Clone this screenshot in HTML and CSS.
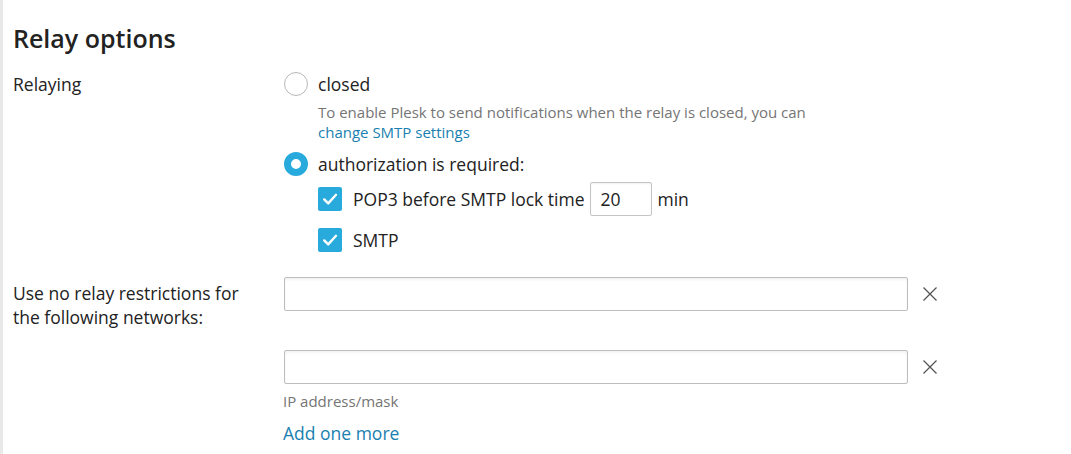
FILE: index.html
```html
<!DOCTYPE html>
<html>
<head>
<meta charset="utf-8">
<link rel="stylesheet" href="styles.css">
</head>
<body>
<div class="page">
  <h2 class="title">Relay options</h2>
  <div class="form-row">
    <div class="label">Relaying</div>
    <div class="field">
      <div class="option">
        <span class="radio"></span>
        <span class="option-text">closed</span>
      </div>
      <div class="hint indent hint-relay">To enable Plesk to send notifications when the relay is closed, you can<br><a class="link" href="#">change SMTP settings</a></div>
      <div class="option option-2">
        <span class="radio checked"></span>
        <span class="option-text">authorization is required:</span>
      </div>
      <div class="option indent check-row">
        <span class="checkbox"><svg width="24" height="24" viewBox="0 0 24 24"><path d="M6.2 12.4l4 4 7.8-8.6" fill="none" stroke="#fff" stroke-width="2.4" stroke-linecap="round" stroke-linejoin="round"/></svg></span>
        <span class="option-text cb-text">POP3 before SMTP lock time</span>
        <span class="small-input">20</span>
        <span class="option-text unit">min</span>
      </div>
      <div class="option indent check-row-2">
        <span class="checkbox"><svg width="24" height="24" viewBox="0 0 24 24"><path d="M6.2 12.4l4 4 7.8-8.6" fill="none" stroke="#fff" stroke-width="2.4" stroke-linecap="round" stroke-linejoin="round"/></svg></span>
        <span class="option-text cb-text">SMTP</span>
      </div>
    </div>
  </div>
  <div class="form-row row-networks">
    <div class="label label-multi">Use no relay restrictions for<br>the following networks:</div>
    <div class="field">
      <div class="net-item">
        <div class="net-line">
          <span class="text-input"></span>
          <span class="remove"><svg width="16" height="16" viewBox="0 0 16 16"><path d="M1.5 1.5l13 13M14.5 1.5l-13 13" stroke="#555" stroke-width="1.3" fill="none"/></svg></span>
        </div>
        <div class="hint net-hint"></div>
      </div>
      <div class="net-item">
        <div class="net-line">
          <span class="text-input"></span>
          <span class="remove"><svg width="16" height="16" viewBox="0 0 16 16"><path d="M1.5 1.5l13 13M14.5 1.5l-13 13" stroke="#555" stroke-width="1.3" fill="none"/></svg></span>
        </div>
        <div class="hint net-hint">IP address/mask</div>
      </div>
      <a class="link add-more" href="#">Add one more</a>
    </div>
  </div>
</div>
</body>
</html>
```

FILE: styles.css
```css
html, body {
  margin: 0;
  padding: 0;
  background: #fff;
}
body {
  font-family: "Open Sans", "DejaVu Sans", sans-serif;
  color: #222;
  width: 1071px;
  height: 454px;
  overflow: hidden;
}
.page {
  border-left: 3px solid #e8e8e8;
  padding-left: 10px;
  height: 454px;
  box-sizing: border-box;
  padding-top: 22px;
}
.title {
  margin: 0;
  font-size: 25px;
  font-weight: 600;
  line-height: 32px;
  color: #222;
}
.form-row {
  display: grid;
  grid-template-columns: 271px 1fr;
  margin-top: 18px;
}
.label {
  font-size: 17.5px;
  line-height: 24px;
  color: #222;
}
.row-networks {
  margin-top: 25px;
}
.label-multi {
  padding-top: 4px;
}
.option {
  display: flex;
  align-items: center;
  min-height: 24px;
  font-size: 17.5px;
  line-height: 24px;
}
.option .radio {
  margin-right: 10px;
}
.option-2 {
  margin-top: 10px;
}
.indent {
  margin-left: 34px;
}
.radio {
  width: 24px;
  height: 24px;
  box-sizing: border-box;
  border: 1px solid #b8b8b8;
  border-radius: 50%;
  background: #fff;
  flex: none;
}
.radio.checked {
  border: 7px solid #28aadc;
}
.checkbox {
  width: 24px;
  height: 24px;
  border-radius: 2px;
  background: #28aadc;
  flex: none;
  display: block;
}
.checkbox svg {
  display: block;
}
.cb-text {
  margin-left: 11px;
}
.check-row {
  margin-top: 6px;
}
.check-row-2 {
  margin-top: 12px;
}
.small-input {
  width: 62px;
  height: 34px;
  box-sizing: border-box;
  border: 1px solid #c4c4c4;
  border-radius: 2px;
  padding: 0 10px;
  margin-left: 5px;
  font-size: 17.5px;
  line-height: 32px;
  color: #222;
  box-shadow: inset 0 1px 2px rgba(0,0,0,0.06);
}
.unit {
  margin-left: 6px;
}
.hint {
  font-size: 15px;
  line-height: 20px;
  color: #757575;
}
.hint-relay {
  margin-top: 6px;
}
.link {
  color: #1a7fb0;
  text-decoration: none;
}
.net-item {
  margin-bottom: 12px;
}
.net-line {
  display: flex;
  align-items: center;
}
.text-input {
  display: block;
  width: 624px;
  height: 34px;
  box-sizing: border-box;
  border: 1px solid #bdbdbd;
  border-radius: 2px;
  background: #fff;
  box-shadow: inset 0 2px 3px rgba(0,0,0,0.05);
}
.remove {
  margin-left: 14px;
  display: flex;
}
.net-hint {
  margin-top: 7px;
  height: 20px;
  margin-left: -1px;
}
.net-item:last-of-type {
  margin-bottom: 0;
}
.add-more {
  display: block;
  margin-top: 10px;
  font-size: 17.5px;
  line-height: 24px;
  margin-left: -1px;
}
```
